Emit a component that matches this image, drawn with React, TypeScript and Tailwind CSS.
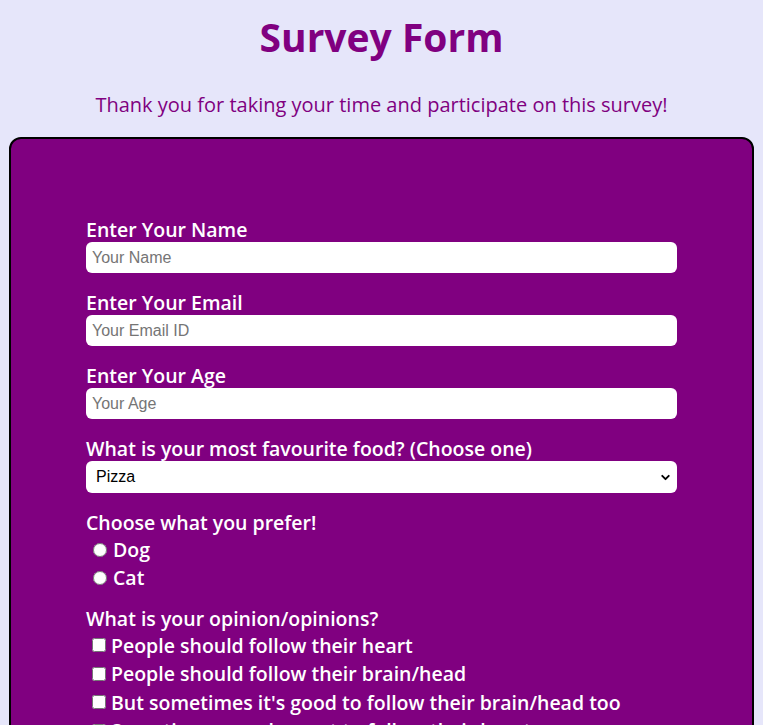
import { ChevronDown } from "lucide-react"

const font = "font-['Comic_Sans_MS','Open_Sans',sans-serif]"

// Text field with label above it
function Field({ label, placeholder }: { label: string; placeholder: string }) {
  return (
    <div className="mb-[18px]">
      <label className="block text-[19.5px] leading-[24px] font-semibold text-white">{label}</label>
      <input
        type="text"
        placeholder={placeholder}
        className="block w-full h-[31px] rounded-[6px] bg-white px-[6px] text-[16px] font-['Liberation_Sans',Arial,sans-serif] text-black placeholder:text-[#757575] outline-none"
      />
    </div>
  )
}

export default function App() {
  const opinions = [
    "People should follow their heart",
    "People should follow their brain/head",
    "But sometimes it's good to follow their brain/head too",
    "Sometimes people want to follow their heart",
  ]

  return (
    <div className={`min-h-screen bg-[#e6e6fa] px-[9px] pb-8 ${font}`}>
      <h1 className="pt-[12px] text-center text-[39px] leading-[50px] font-bold text-[#800080]">Survey Form</h1>
      <p className="mt-[31px] text-center text-[20px] leading-[24px] text-[#800080]">
        Thank you for taking your time and participate on this survey!
      </p>

      <form className="mt-[20px] rounded-[12px] border-2 border-black bg-[#800080] px-[75px] pt-[79px] pb-10">
        <Field label="Enter Your Name" placeholder="Your Name" />
        <Field label="Enter Your Email" placeholder="Your Email ID" />
        <Field label="Enter Your Age" placeholder="Your Age" />

        <div className="mb-[18px]">
          <label className="block text-[19.5px] leading-[24px] font-semibold text-white">
            What is your most favourite food? (Choose one)
          </label>
          <div className="relative">
            <select className="block w-full h-[32px] appearance-none rounded-[6px] bg-white px-[10px] text-[16px] font-['Liberation_Sans',Arial,sans-serif] text-black outline-none">
              <option>Pizza</option>
              <option>Burger</option>
              <option>Pasta</option>
            </select>
            <ChevronDown className="pointer-events-none absolute right-[5px] top-[10px] h-[13px] w-[13px] text-black" strokeWidth={3.5} />
          </div>
        </div>

        <div className="mb-[16px] text-white">
          <p className="text-[19.5px] leading-[24px] font-semibold">Choose what you prefer!</p>
          {["Dog", "Cat"].map((pet) => (
            <label key={pet} className="flex items-center h-[28px] pt-[2px] text-[19.5px] font-semibold">
              <input type="radio" name="pet" className="ml-[7px] mr-[6px] h-[14px] w-[14px]" />
              {pet}
            </label>
          ))}
        </div>

        <div className="text-white">
          <p className="text-[19.5px] leading-[24px] font-semibold">What is your opinion/opinions?</p>
          {opinions.map((op) => (
            <label key={op} className="flex items-center h-[28.5px] text-[19.5px] font-semibold">
              <input type="checkbox" className="ml-[6px] mr-[5px] h-[14px] w-[14px]" />
              {op}
            </label>
          ))}
        </div>
      </form>
    </div>
  )
}
